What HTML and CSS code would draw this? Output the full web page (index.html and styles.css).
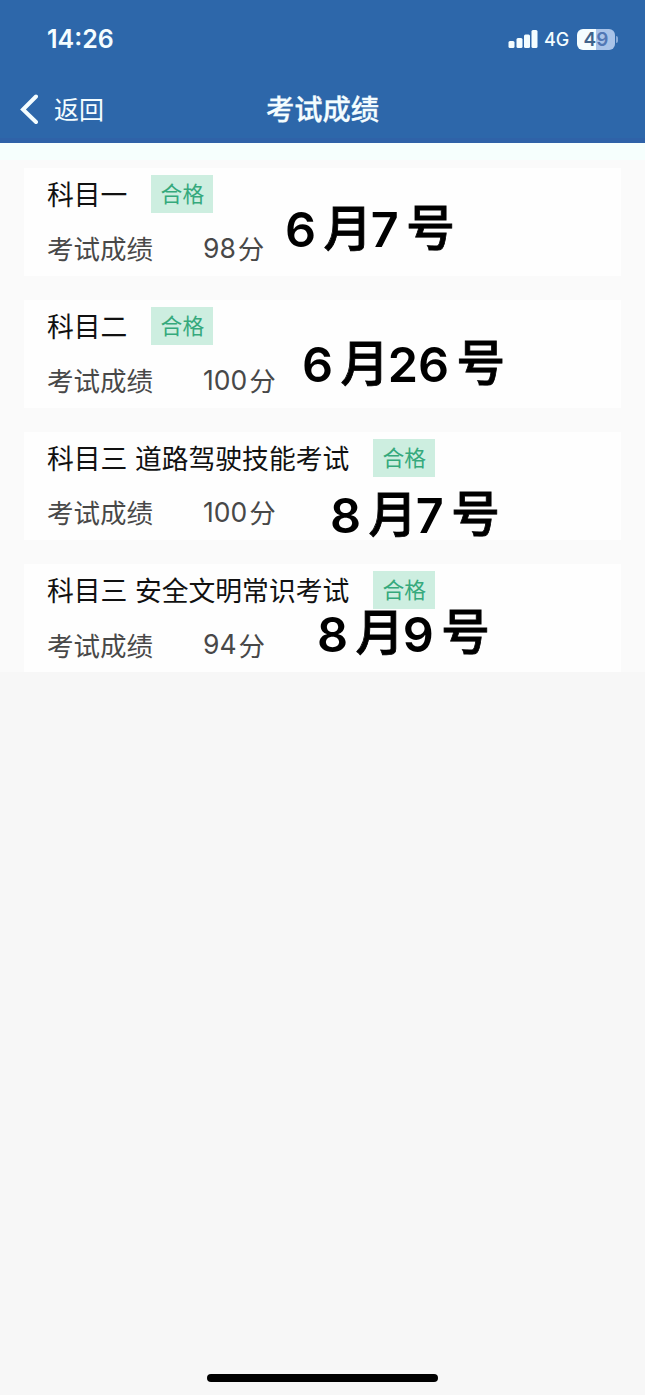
FILE: index.html
```html
<!DOCTYPE html>
<html lang="zh-CN">
<head>
  <meta charset="UTF-8" />
  <meta name="viewport" content="width=device-width, initial-scale=1">
  <title>考试成绩</title>
  <link rel="stylesheet" href="styles.css">
</head>
<body>
  <header>
    <div class="status-bar">
      <span class="time">14:26</span>
      <div class="status-icons">
        <svg class="signal" width="30" height="20" viewBox="0 0 30 20">
          <rect x="0.500" y="12" width="6" height="7" rx="1.5" />
          <rect x="8.500" y="9" width="6" height="10" rx="1.5" />
          <rect x="16" y="5.500" width="6" height="13.500" rx="1.5" />
          <rect x="23.500" y="1" width="6" height="18" rx="1.5" />
        </svg>
        <span class="network">4G</span>
        <div class="battery"><span>4</span><span class="low">9</span></div>
        <i class="battery-cap"></i>
      </div>
    </div>
    <nav>
      <a class="back">
        <svg width="20" height="32" viewBox="0 0 20 32">
          <path d="M18 3.500 L5 16.500 L18 29" />
        </svg>
        <span>返回</span>
      </a>
      <h1>考试成绩</h1>
    </nav>
  </header>

  <main>
    <section class="card">
      <div class="subject"><h2>科目一</h2><span class="badge">合格</span></div>
      <div class="score"><span class="label">考试成绩</span><span class="num">98</span>分</div>
      <div class="note note1"><b>6</b><em>月</em><b>7</b><em>号</em></div>
    </section>
    <section class="card">
      <div class="subject"><h2>科目二</h2><span class="badge">合格</span></div>
      <div class="score"><span class="label">考试成绩</span><span class="num">100</span>分</div>
      <div class="note note2"><b>6</b><em>月</em><b>26</b><em>号</em></div>
    </section>
    <section class="card">
      <div class="subject"><h2>科目三 道路驾驶技能考试</h2><span class="badge">合格</span></div>
      <div class="score"><span class="label">考试成绩</span><span class="num">100</span>分</div>
      <div class="note note3"><b>8</b><em>月</em><b>7</b><em>号</em></div>
    </section>
    <section class="card">
      <div class="subject"><h2>科目三 安全文明常识考试</h2><span class="badge">合格</span></div>
      <div class="score"><span class="label">考试成绩</span><span class="num">94</span>分</div>
      <div class="note note4"><b>8</b><em>月</em><b>9</b><em>号</em></div>
    </section>
  </main>

  <footer><div class="home-bar"></div></footer>
</body>
</html>
```
FILE: styles.css
```css
* {
  box-sizing: border-box;
}
body {
  margin: 0;
  height: 1395px;
  display: flex;
  flex-direction: column;
  background: #f7f7f7;
  font-family: Inter, "Noto Sans CJK SC", sans-serif;
  color: #111;
}

/* Header */
header {
  height: 143px;
  background: #2d67aa;
  border-bottom: 5px solid #2f62a8;
  color: #f4fdff;
}
.status-bar {
  height: 78px;
  padding: 0 27px 0 47px;
  display: flex;
  align-items: center;
  justify-content: space-between;
}
.time {
  font-size: 25px;
  font-weight: 600;
}
.status-icons {
  display: flex;
  align-items: center;
}
.signal {
  fill: #f4fdff;
}
.network {
  margin-left: 6px;
  width: 33px;
  font-size: 18px;
  font-weight: 500;
}
.battery {
  width: 38px;
  height: 21px;
  border-radius: 6px;
  background: linear-gradient(90deg, #f4fdff 19px, #a9c3e8 19px);
  display: flex;
  align-items: center;
  justify-content: center;
  font-size: 19px;
  font-weight: 600;
  color: #3f648c;
}
.battery .low {
  color: #5277b5;
}
.battery-cap {
  width: 2px;
  height: 7px;
  margin-left: 1px;
  border-radius: 0 2px 2px 0;
  background: #86a9d8;
}
nav {
  height: 60px;
  padding: 0 18px;
  display: grid;
  grid-template-columns: 1fr auto 1fr;
  align-items: center;
}
.back {
  display: flex;
  align-items: center;
  gap: 16px;
  font-size: 25px;
}
.back svg {
  margin-top: 2px;
}
.back path {
  fill: none;
  stroke: #f4fdff;
  stroke-width: 4;
  stroke-linecap: round;
}
h1 {
  margin: 0;
  padding-bottom: 2px;
  font-size: 28.300px;
  font-weight: 500;
  -webkit-text-stroke: 0.3px #f4fdff;
}

/* Result cards */
main {
  padding: 24.500px 24px 0;
  height: 529px;
  display: flex;
  flex-direction: column;
  gap: 24.200px;
  background: linear-gradient(#f6fffd 17px, #fafafa 17px);
}
.card {
  position: relative;
  height: 108px;
  flex: none;
  padding: 7px 23px 0;
  background: #fefefe;
}
.subject {
  display: flex;
  align-items: center;
  height: 38px;
}
h2 {
  margin: 0;
  padding-bottom: 1px;
  font-size: 26.800px;
  font-weight: 400;
}
.badge {
  margin-left: 24px;
  width: 62px;
  height: 38px;
  line-height: 38px;
  text-align: center;
  font-size: 21.800px;
  color: #35a97c;
  background: #cdeee0;
}
.score {
  display: flex;
  align-items: center;
  height: 38px;
  margin-top: 16px;
  font-size: 26.500px;
  color: #484848;
}
.label {
  width: 156px;
}
.num {
  margin-right: 2px;
}

/* Date notes written over the cards */
.note {
  position: absolute;
  display: flex;
  align-items: center;
  height: 60px;
  font-size: 48.600px;
  color: #000;
}
.note b {
  font-weight: 600;
}
.note em {
  font-style: normal;
  font-weight: 500;
  -webkit-text-stroke: 0.8px #000;
  padding-bottom: 10px;
  margin-left: 7.500px;
  margin-right: -1.500px;
}
.note1 {
  left: 261px;
  top: 32px;
}
.note2 {
  left: 278px;
  top: 35px;
}
.note3 {
  left: 306px;
  top: 54px;
}
.note4 {
  left: 293px;
  top: 40px;
}

footer {
  margin-top: auto;
  padding-bottom: 13px;
}
.home-bar {
  width: 231px;
  height: 8px;
  margin: 0 auto;
  border-radius: 4px;
  background: #000;
}
```
